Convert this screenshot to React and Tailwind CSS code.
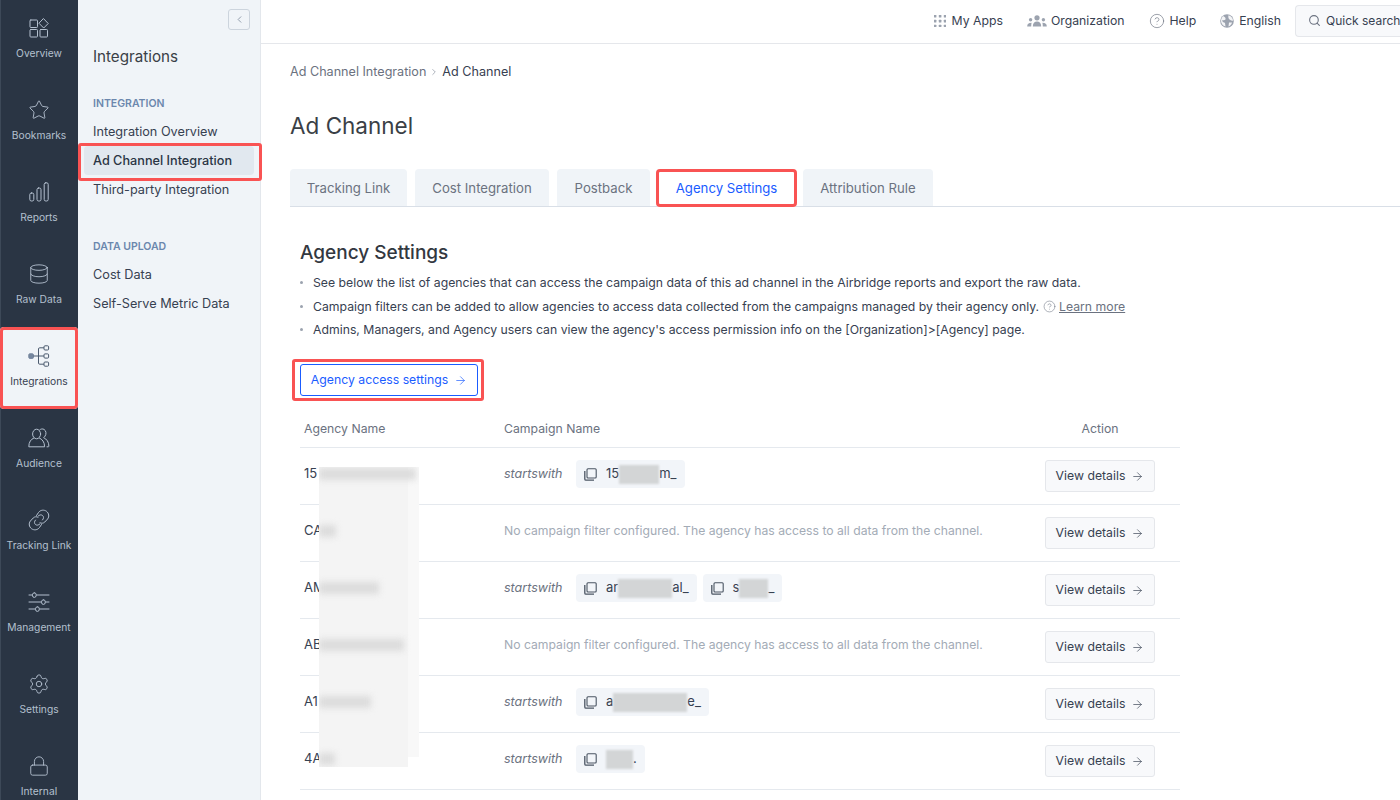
import React from "react";
import { Star, Database, Settings, Lock, CircleHelp, Search, ChevronRight, ChevronLeft, ArrowRight } from "lucide-react";

const ic = { fill: "none", stroke: "currentColor", strokeWidth: 1, strokeLinecap: "round", strokeLinejoin: "round" };

const OverviewIcon = () => (
  <svg width="20" height="20" viewBox="0 0 20 20" {...ic}>
    <rect x="1" y="2" width="7.5" height="7.5" rx="0.8" />
    <rect x="1" y="11.5" width="7.5" height="7.5" rx="0.8" />
    <rect x="11" y="11.5" width="7.5" height="7.5" rx="0.8" />
    <path d="M14.7 0.8 L19.2 5.5 L14.7 10 L10.2 5.5 Z" />
  </svg>
);
const BarsIcon = () => (
  <svg width="20" height="20" viewBox="0 0 20 20" {...ic}>
    <rect x="0.8" y="11" width="4" height="8" rx="1.6" />
    <rect x="8" y="6" width="4" height="13" rx="1.6" />
    <rect x="15.2" y="0.8" width="4" height="18.2" rx="1.6" />
  </svg>
);
const TreeIcon = () => (
  <svg width="22" height="22" viewBox="0 0 22 22" fill="none" stroke="currentColor" strokeWidth="1">
    <rect x="0.8" y="8.8" width="4.6" height="4.6" rx="1" fill="#76879f" stroke="#76879f" />
    <path d="M5.4 11 H16 M10.5 11 V4 Q10.5 2.8 11.7 2.8 H16 M10.5 11 V18 Q10.5 19.2 11.7 19.2 H16" />
    <rect x="16" y="0.8" width="4.6" height="4.2" rx="1" />
    <rect x="16" y="8.9" width="4.6" height="4.2" rx="1" />
    <rect x="16" y="17" width="4.6" height="4.2" rx="1" />
  </svg>
);
const PeopleIcon = () => (
  <svg width="22" height="20" viewBox="0 0 22 20" {...ic}>
    <ellipse cx="8.6" cy="6" rx="4" ry="4.8" />
    <path d="M5.8 10 C3 11.2 0.8 14 0.8 18.8 H16.6 C16.6 14 14.2 11.2 11.4 10" />
    <path d="M11.6 2 C12.8 0.8 14.6 0.6 16 1.4 C18.2 2.6 18.6 6 17 8.2 C16.6 8.8 16.2 9.2 15.6 9.6 C18.6 11 20.9 14 20.9 18.2 C20.9 18.6 20.6 18.8 20.2 18.8 H19" />
  </svg>
);
const LinkIcon = () => (
  <svg width="22" height="22" viewBox="0 0 22 22" {...ic}>
    <path d="M8.5 6.5 L10.5 3.5 C12.5 0.8 16 0.5 18.5 2.3 C21 4.3 21.5 7.6 19.6 10 L16.8 13 C15.4 14.4 13.6 14.6 12 13.8" />
    <path d="M13.5 15.5 L11.5 18.5 C9.5 21.2 6 21.5 3.5 19.7 C1 17.7 0.5 14.4 2.4 12 L5.2 9 C6.6 7.6 8.4 7.4 10 8.2" />
    <path d="M7.5 11 C6 12.5 6.2 14.6 7.6 15.6 C9 16.6 10.6 16.2 11.8 15" />
    <path d="M14.5 11 C16 9.5 15.8 7.4 14.4 6.4 C13 5.4 11.4 5.8 10.2 7" />
  </svg>
);
const SlidersIcon = () => (
  <svg width="22" height="20" viewBox="0 0 22 20" {...ic}>
    <path d="M1 3 H4.5 M8.5 3 H21 M1 10 H13.5 M17.5 10 H21 M1 17 H7.5 M11.5 17 H21" />
    <rect x="4.5" y="0.8" width="3.6" height="4.6" rx="1.8" />
    <rect x="13.6" y="7.8" width="3.6" height="4.6" rx="1.8" />
    <rect x="7.6" y="14.8" width="3.6" height="4.6" rx="1.8" />
  </svg>
);
const CopyIcon = () => (
  <svg className="w-[13px] h-[13px] shrink-0 text-[#4b5563]" viewBox="0 0 13 13" fill="none" stroke="currentColor" strokeWidth="1.1">
    <rect x="3" y="0.8" width="9.2" height="9.2" rx="1" />
    <path d="M0.8 3 V11 Q0.8 12.2 2 12.2 H10" strokeWidth="1.3" />
  </svg>
);
const DotsIcon = () => (
  <svg width="12" height="12" viewBox="0 0 12 12" fill="#9ca3af">
    {[1, 6, 11].flatMap((x) => [1, 6, 11].map((y) => <rect key={`${x}-${y}`} x={x - 1.2} y={y - 1.2} width="2.6" height="2.6" rx="0.5" />))}
  </svg>
);
const OrgIcon = () => (
  <svg width="20" height="12" viewBox="0 0 20 12" fill="#9ca3af">
    <circle cx="10" cy="2.8" r="2.6" />
    <path d="M5.8 11.5 C5.8 8 7.5 6.5 10 6.5 C12.5 6.5 14.2 8 14.2 11.5 Z" />
    <circle cx="3.6" cy="4.8" r="1.7" />
    <path d="M0.2 11.5 C0.2 9 1.5 7.8 4.6 7.8 C4.3 9 4.2 10 4.2 11.5 Z" />
    <circle cx="16.4" cy="4.8" r="1.7" />
    <path d="M19.8 11.5 C19.8 9 18.5 7.8 15.4 7.8 C15.7 9 15.8 10 15.8 11.5 Z" />
  </svg>
);
const GlobeIcon = () => (
  <svg width="14" height="14" viewBox="0 0 14 14">
    <circle cx="7" cy="7" r="6.8" fill="#9ca3af" />
    <path d="M3 2 C5 3 6 4 5.5 5.5 C4.5 6.5 3 6 2 6.5 C2.5 8 4 8.5 5 9 L5.5 12.5 C3 12 1 9.5 1 7 C1 5 2 3 3 2 Z M8.5 1.2 C11 2 13 4 13 6.5 C12 7 10.5 6.5 9.5 5.5 C8.5 4.5 8 3 8.5 1.2 Z M9 8.5 L12 8.5 C11.5 10.5 10 12 8.5 12.5 Z" fill="#f3f4f6" />
  </svg>
);

const railItems = [
  ["Overview", <OverviewIcon />],
  ["Bookmarks", <Star size={22} strokeWidth={1} />],
  ["Reports", <BarsIcon />],
  ["Raw Data", <Database size={22} strokeWidth={1} />],
  ["Integrations", <TreeIcon />, true],
  ["Audience", <PeopleIcon />],
  ["Tracking Link", <LinkIcon />],
  ["Management", <SlidersIcon />],
  ["Settings", <Settings size={22} strokeWidth={1} />],
  ["Internal", <Lock size={22} strokeWidth={1} />],
];

const Blur = ({ w }) => <span style={{ width: w }} className="inline-block h-[19px] bg-[#d3d5d6] blur-[1px]" />;

const Chip = ({ children }) => (
  <span className="flex items-center h-7 rounded bg-[#f2f5f9] pl-2 pr-2 gap-[9px] text-[13px] text-[#374151]">
    <CopyIcon />
    <span className="flex items-center">{children}</span>
  </span>
);

const NoFilter = () => (
  <span className="text-[12.2px] text-[#a3abb6]">No campaign filter configured. The agency has access to all data from the channel.</span>
);

const Starts = ({ children }) => (
  <span className="flex items-center">
    <span className="w-[72px] italic text-[12.5px] text-[#6b7280]">startswith</span>
    <span className="flex items-center gap-[6px]">{children}</span>
  </span>
);

const rows = [
  ["15", <Starts><Chip>15<Blur w={40} />m_</Chip></Starts>],
  ["CA", <NoFilter />],
  ["AM", <Starts><Chip>ar<Blur w={54} />al_</Chip><Chip>s<Blur w={29} />_</Chip></Starts>],
  ["AB", <NoFilter />],
  ["A1", <Starts><Chip>a<Blur w={74} />e_</Chip></Starts>],
  ["4A", <Starts><Chip><Blur w={27} />.</Chip></Starts>],
];

const tabs = [
  ["Tracking Link", "w-[117px]"],
  ["Cost Integration", "w-[134px]"],
  ["Postback", "w-[93px]"],
  ["Agency Settings", "w-[141px] -mx-[2px]"],
  ["Attribution Rule", "w-[130px]"],
];
const smears = [[1, 97], [58, 17], [115, 60], [172, 85], [229, 52], [286, 16]];

export default function App() {
  return (
    <div className="flex w-[1400px] h-[800px] overflow-hidden bg-white text-[12.25px] text-[#374151] font-['Inter','Liberation_Sans',sans-serif]">
      <nav className="w-[78px] shrink-0 bg-[#2a3544] flex flex-col border-l border-[#3d4958]">
        {railItems.map(([label, icon, active], i) => (
          <div
            key={label}
            className={`shrink-0 flex flex-col items-center gap-[6px] pt-[17px] h-[82px] -ml-px w-[78px] ${i === 0 ? "-mt-px" : ""} ${active ? "relative z-10 bg-[#f0f4f8] text-[#4b5a6e] outline-[3px] -outline-offset-[3px] outline-[#f95353] rounded" : "text-[#b4c0cf]"}`}
          >
            <span className="h-[24px] flex items-center justify-center">{icon}</span>
            <span className={`text-[10.25px] leading-[14px] whitespace-nowrap ${active ? "text-[#374151]" : ""}`}>{label}</span>
          </div>
        ))}
      </nav>

      <aside className="relative w-[183px] shrink-0 bg-[#f0f4f8] border-r border-[#e3e7ec] pt-[45px] text-[12.7px]">
        <button className="absolute top-[9px] right-[10px] w-[22px] h-[21px] border border-[#ccd4dd] rounded-[3px] flex items-center justify-center text-[#8a96a5]">
          <ChevronLeft size={11} />
        </button>
        <h2 className="pl-[15px] text-[15.2px] leading-[24px] text-[#3a3f46]">Integrations</h2>
        <div className="mt-[27px] pl-[15px] text-[10.5px] leading-[16px] font-semibold text-[#6b87ad]">INTEGRATION</div>
        <div className="mt-[5px] flex flex-col">
          <div className="h-[29px] pl-[15px] flex items-center">Integration Overview</div>
          <div className="relative z-20 h-[29px] mx-[6px] pl-[9px] flex items-center rounded bg-[#e1e8ef] font-medium text-[#2a3544]">
            Ad Channel Integration
            <span className="absolute -left-[6px] -right-[8px] -top-[3px] -bottom-[6px] border-[3px] border-[#f95353] rounded-[3px]" />
          </div>
          <div className="h-[29px] pl-[15px] flex items-center">Third-party Integration</div>
        </div>
        <div className="mt-[35px] pl-[15px] text-[10.5px] leading-[16px] font-semibold text-[#6b87ad]">DATA UPLOAD</div>
        <div className="mt-[5px] flex flex-col">
          <div className="h-[29px] pl-[15px] flex items-center">Cost Data</div>
          <div className="h-[29px] pl-[15px] flex items-center">Self-Serve Metric Data</div>
        </div>
      </aside>

      <div className="flex-1 min-w-0 flex flex-col">
        <header className="h-[44px] shrink-0 border-b border-[#e5e7eb] flex items-center justify-end pb-[2px]">
          <div className="flex items-center gap-[6px] mr-6 pt-px"><DotsIcon />My Apps</div>
          <div className="flex items-center gap-[4px] mr-[24px] pt-px"><OrgIcon />Organization</div>
          <div className="flex items-center gap-[5px] mr-[24px] pt-px"><CircleHelp size={16} strokeWidth={1} className="text-[#6b7280]" />Help</div>
          <div className="flex items-center gap-[5px] mr-[14px] pt-px"><GlobeIcon />English</div>
          <div className="w-[105px] h-[32px] flex items-center gap-[5px] pl-3 border border-r-0 border-[#e5e7eb] rounded-l bg-[#f8f9fb] whitespace-nowrap text-[12px]">
            <Search size={13} className="text-[#6b7280] shrink-0" /><span className="pt-px">Quick search</span>
          </div>
        </header>

        <main className="flex-1 pl-[29px] pt-[19px] min-h-0">
          <div className="flex items-center gap-[3px] h-[18px] text-[12.6px] text-[#6b7280]">
            Ad Channel Integration
            <ChevronRight size={10} className="text-[#9ca3af]" />
            <span className="text-[#374151]">Ad Channel</span>
          </div>
          <h1 className="mt-[29px] text-[22.5px] leading-[32px] text-[#3a3f46]">Ad Channel</h1>

          <div className="mt-[27px] flex gap-2 h-[38px] border-b border-[#d9dfe7] text-[13.2px]">
            {tabs.map(([t, w]) => (
              <div
                key={t}
                className={t === "Agency Settings"
                  ? `${w} h-[38px] pt-[2px] flex items-center justify-center text-[#1a5cff] bg-white rounded outline-[3px] -outline-offset-[3px] outline-[#f95353]`
                  : `${w} h-[37px] pt-[2px] flex items-center justify-center rounded-t bg-[#f0f4f8] text-[#6b7280]`}
              >
                {t}
              </div>
            ))}
          </div>

          <section className="ml-[10px] w-[880px]">
            <h2 className="mt-[33px] text-[19px] leading-[26px] font-medium text-[#33383f]">Agency Settings</h2>
            <ul className="mt-[5px] flex flex-col text-[12.25px] leading-[23.5px] whitespace-nowrap">
              {[
                "See below the list of agencies that can access the campaign data of this ad channel in the Airbridge reports and export the raw data.",
                <>Campaign filters can be added to allow agencies to access data collected from the campaigns managed by their agency only. <CircleHelp size={13} strokeWidth={1} className="inline -mt-px text-[#6b7280]" /> <span className="underline text-[#6b7280]">Learn more</span></>,
                "Admins, Managers, and Agency users can view the agency's access permission info on the [Organization]>[Agency] page.",
              ].map((t, i) => (
                <li key={i} className="flex items-center gap-[10px]">
                  <span className="w-[3px] h-[3px] rounded-full bg-[#9ca3af]" />
                  <span>{t}</span>
                </li>
              ))}
            </ul>

            <button className="relative mt-[22px] w-[178px] h-[32px] pt-px flex items-center justify-center gap-[6px] rounded-[3px] border border-[#1a5cff] text-[#1a5cff]">
              Agency access settings <ArrowRight size={13} strokeWidth={1.25} />
              <span className="absolute -left-[9px] -right-[7px] -top-[6px] -bottom-[6px] border-[3px] border-[#f95353] rounded-[3px]" />
            </button>

            <div className="relative mt-[15px]">
              <div className="h-[37px] pt-px flex items-center border-b border-[#e5e9ee] text-[#6b7280]">
                <div className="w-[204px] pl-1">Agency Name</div>
                <div className="flex-1">Campaign Name</div>
                <div className="w-[160px] text-center">Action</div>
              </div>
              {rows.map(([name, content], i) => (
                <div key={i} className="h-[57px] flex items-center border-b border-[#e5e9ee]">
                  <div className="w-[204px] pl-1 -mt-[3px] text-[13px] text-[#374151]">{name}</div>
                  <div className="flex-1 -mt-[3px]">{content}</div>
                  <div className="w-[160px] flex justify-center">
                    <button className="w-[110px] h-8 pt-px flex items-center justify-center gap-[6px] rounded-[3px] border border-[#e5e7eb] bg-[#f8f9fb] text-[#374151]">
                      View details <ArrowRight size={13} strokeWidth={1.25} />
                    </button>
                  </div>
                </div>
              ))}
              <div className="absolute left-[108px] top-[56px] w-[11px] h-[290px] bg-[#f8f8f8]" />
              <div className="absolute left-[19px] top-[56px] w-[89px] h-[300px] bg-[#f4f4f4]" />
              <div className="absolute left-[19px] top-[56px] w-[100px] h-[300px] overflow-hidden">
                {smears.map(([top, w], i) => (
                  <div key={i} style={{ top, width: w }} className="absolute left-0 h-[12px] bg-[#dcdcdc] blur-[3px]" />
                ))}
              </div>
            </div>
          </section>
        </main>
      </div>
    </div>
  );
}
